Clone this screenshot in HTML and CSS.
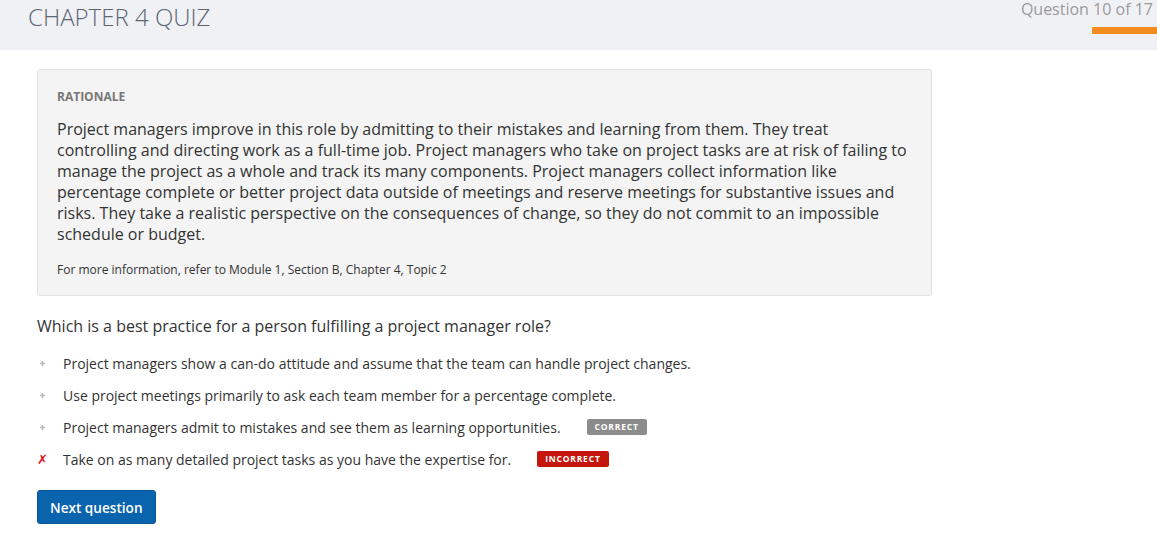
FILE: index.html
```html
<!DOCTYPE html>
<html lang="en">
<head>
<meta charset="utf-8">
<title>Chapter 4 Quiz</title>
<link rel="stylesheet" href="styles.css">
</head>
<body>
<header class="topbar">
  <h1 class="title">CHAPTER 4 QUIZ</h1>
  <div class="progress">
    <div class="progress-label">Question 10 of 17</div>
    <div class="progress-bar"></div>
  </div>
</header>
<main class="content">
  <section class="rationale">
    <h2 class="rationale-head">RATIONALE</h2>
    <p class="rationale-text">Project managers improve in this role by admitting to their mistakes and learning from them. They treat controlling and directing work as a full-time job. Project managers who take on project tasks are at risk of failing to manage the project as a whole and track its many components. Project managers collect information like percentage complete or better project data outside of meetings and reserve meetings for substantive issues and risks. They take a realistic perspective on the consequences of change, so they do not commit to an impossible schedule or budget.</p>
    <p class="rationale-ref">For more information, refer to Module 1, Section B, Chapter 4, Topic 2</p>
  </section>
  <p class="question">Which is a best practice for a person fulfilling a project manager role?</p>
  <ul class="options">
    <li class="option"><span class="mark"><svg width="7" height="7" viewBox="0 0 7 7"><path d="M3.5 0.3 L4.6 2.4 L6.7 3.5 L4.6 4.6 L3.5 6.7 L2.4 4.6 L0.3 3.5 L2.4 2.4 Z" fill="#bdbdbd"/></svg></span><span class="opt-text">Project managers show a can-do attitude and assume that the team can handle project changes.</span></li>
    <li class="option"><span class="mark"><svg width="7" height="7" viewBox="0 0 7 7"><path d="M3.5 0.3 L4.6 2.4 L6.7 3.5 L4.6 4.6 L3.5 6.7 L2.4 4.6 L0.3 3.5 L2.4 2.4 Z" fill="#bdbdbd"/></svg></span><span class="opt-text">Use project meetings primarily to ask each team member for a percentage complete.</span></li>
    <li class="option"><span class="mark"><svg width="7" height="7" viewBox="0 0 7 7"><path d="M3.5 0.3 L4.6 2.4 L6.7 3.5 L4.6 4.6 L3.5 6.7 L2.4 4.6 L0.3 3.5 L2.4 2.4 Z" fill="#bdbdbd"/></svg></span><span class="opt-text">Project managers admit to mistakes and see them as learning opportunities.</span><span class="badge badge-correct">CORRECT</span></li>
    <li class="option"><span class="mark mark-wrong">✗</span><span class="opt-text">Take on as many detailed project tasks as you have the expertise for.</span><span class="badge badge-incorrect">INCORRECT</span></li>
  </ul>
  <button class="next-btn" type="button">Next question</button>
</main>
</body>
</html>
```
FILE: styles.css
```css
html, body {
  margin: 0;
  padding: 0;
  background: #ffffff;
  font-family: "Open Sans", "Liberation Sans", sans-serif;
  color: #333333;
}

.topbar {
  height: 50px;
  background: #f0f1f5;
  display: flex;
  justify-content: space-between;
  align-items: flex-start;
}

.title {
  margin: 0;
  padding: 2px 0 0 28px;
  font-size: 24px;
  font-weight: 300;
  color: #5d6570;
  line-height: 30px;
}

.progress {
  display: flex;
  flex-direction: column;
  align-items: flex-end;
}

.progress-label {
  font-size: 16px;
  line-height: 18px;
  color: #9b9b9b;
  padding-right: 4px;
}

.progress-bar {
  margin-top: 9px;
  width: 65px;
  height: 7px;
  background: #f28c1f;
  border-radius: 1px 0 0 1px;
}

.content {
  padding: 19px 0 0 37px;
}

.rationale {
  width: 855px;
  background: #f4f4f4;
  border: 1px solid #e2e2e2;
  border-radius: 3px;
  padding: 18px 19px 17px 19px;
}

.rationale-head {
  margin: 0;
  font-size: 12px;
  font-weight: 700;
  color: #777777;
  line-height: 17px;
}

.rationale-text {
  margin: 14px 0 0 0;
  font-size: 16px;
  line-height: 21px;
  color: #333333;
}

.rationale-ref {
  margin: 16px 0 0 0;
  font-size: 12px;
  line-height: 17px;
  color: #333333;
}

.question {
  margin: 19px 0 0 0;
  font-size: 16px;
  line-height: 22px;
  color: #333333;
}

.options {
  list-style: none;
  margin: 10px 0 0 0;
  padding: 0;
}

.option {
  display: flex;
  align-items: center;
  height: 32px;
  font-size: 14px;
  color: #333333;
}

.mark {
  width: 26px;
  display: flex;
  align-items: center;
  padding-left: 2px;
  box-sizing: border-box;
}

.mark-wrong {
  color: #e0101a;
  font-family: "DejaVu Sans", sans-serif;
  font-size: 13px;
  font-weight: 700;
  padding-left: 0;
}

.badge {
  display: inline-block;
  font-size: 8.5px;
  font-weight: 700;
  letter-spacing: 0.8px;
  color: #ffffff;
  line-height: 16px;
  padding: 0 8px;
  border-radius: 2px;
  margin-top: -1px;
}

.badge-correct {
  background: #8c8c8c;
  margin-left: 26px;
}

.badge-incorrect {
  background: #c4160b;
  margin-left: 26px;
}

.next-btn {
  display: block;
  margin-top: 15px;
  background: #0a63ad;
  color: #ffffff;
  border: 1px solid #0a5598;
  border-radius: 3px;
  font-family: "Open Sans", "Liberation Sans", sans-serif;
  font-size: 13.6px;
  font-weight: 600;
  padding: 0 12px;
  height: 34px;
  white-space: nowrap;
  cursor: pointer;
}
```
